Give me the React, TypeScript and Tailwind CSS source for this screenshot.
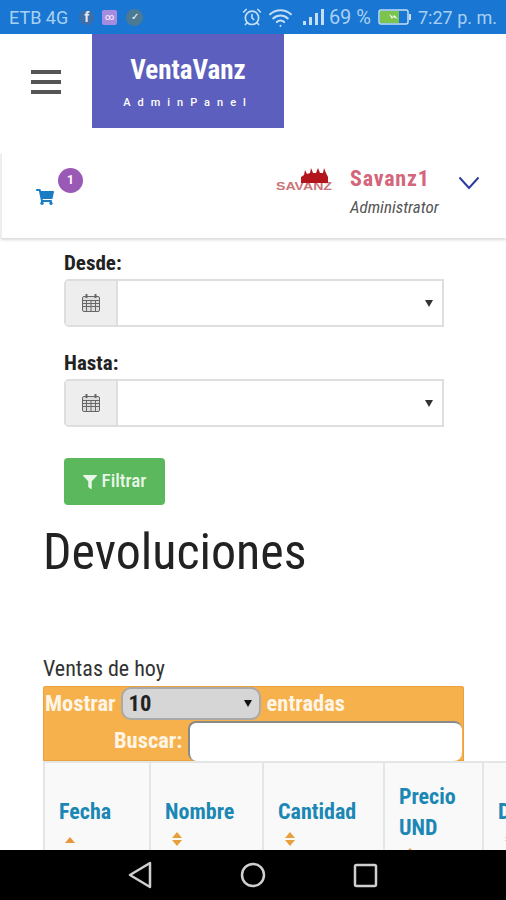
import { AlarmClock, Wifi } from "lucide-react";
import { FaFilter, FaShoppingCart } from "react-icons/fa";

const condensed = "font-['Roboto',sans-serif] [font-stretch:75%]";

function CalendarIcon() {
  return (
    <svg width="20" height="20" viewBox="0 0 20 20" fill="none" stroke="#666" strokeWidth="1">
      <rect x="1.5" y="3.5" width="17" height="15" rx="1.5" fill="#ddd" />
      <path d="M1.5 7.5h17M1.5 10.5h17M1.5 13.5h17M5.5 7.5v11M10 7.5v11M14.5 7.5v11" />
      <path d="M5.5 1v4M14.5 1v4" strokeWidth="2" />
    </svg>
  );
}

function DateField({ label }: { label: string }) {
  return (
    <div>
      <div className={`${condensed} text-[21px] leading-[24px] font-bold text-[#222]`}>{label}</div>
      <div className="mt-[4px] flex h-[48px] w-[380px] rounded-l-[5px] border-2 border-[#dedede]">
        <div className="flex w-[52px] items-center justify-center border-r-2 border-[#dedede] bg-[#eeeeee]">
          <CalendarIcon />
        </div>
        <div className="flex flex-1 items-center justify-end bg-white pr-[9px]">
          <span className="h-0 w-0 border-x-[4px] border-t-[7px] border-x-transparent border-t-[#333]" />
        </div>
      </div>
    </div>
  );
}

function SortBoth() {
  return (
    <div className="ml-[7px] mt-[5px] flex flex-col gap-[2px]">
      <span className="h-0 w-0 border-x-[5px] border-b-[6px] border-x-transparent border-b-[#e8a03a]" />
      <span className="h-0 w-0 border-x-[5px] border-t-[6px] border-x-transparent border-t-[#e8a03a]" />
    </div>
  );
}

function SortUp({ gap }: { gap: string }) {
  return <div className={`ml-[6px] h-0 w-0 border-x-[5px] border-b-[6px] border-x-transparent border-b-[#e8963a] ${gap}`} />;
}

function HeadCell({ width, title, children }: { width: string; title: string; children: React.ReactNode }) {
  return (
    <div className={`${width} shrink-0 border-r-2 border-[#e4e6e6] bg-[#f9f9f9] pl-[14px] pt-[33px]`}>
      <div className={`${condensed} text-[22px] leading-[31px] font-bold text-[#1b87b5]`}>{title}</div>
      {children}
    </div>
  );
}

export default function App() {
  return (
    <div className="flex h-[900px] w-[506px] flex-col overflow-hidden bg-white">
      {/* Status bar */}
      <div className="flex h-[34px] shrink-0 items-center justify-between bg-[#1976d2] pl-[9px] pr-[9px] font-['Roboto',sans-serif] text-[18px] text-[#a9d0f2]">
        <div className="flex items-center">
          <span>ETB 4G</span>
          <span className="ml-[11px] flex h-[15px] w-[15px] items-center justify-center rounded-full bg-[#3d6ea8] text-[14px] leading-none font-bold text-[#dfe9f5]">
            f
          </span>
          <span className="ml-[8px] flex h-[15px] w-[15px] items-center justify-center rounded-[2px] bg-[#a58ce0] text-[9px] leading-none text-white">
            ∞
          </span>
          <span className="ml-[9px] flex h-[17px] w-[17px] items-center justify-center rounded-full bg-[#4c7a94] text-[10px] leading-none text-white">
            ✓
          </span>
        </div>
        <div className="flex items-center">
          <AlarmClock size={20} strokeWidth={2} className="text-[#c4def5]" />
          <Wifi size={25} strokeWidth={2} className="ml-[6px] text-[#c4def5]" />
          <svg width="24" height="18" viewBox="0 0 24 18" className="ml-[9px]" fill="#c4def5">
            <rect x="1" y="13" width="3" height="4" />
            <rect x="7" y="9" width="3" height="8" />
            <rect x="13" y="5" width="3" height="12" />
            <rect x="19" y="1" width="3" height="16" />
          </svg>
          <span className="ml-[3px] text-[20px]">69 %</span>
          <svg width="34" height="16" viewBox="0 0 34 16" className="ml-[7px]">
            <rect x="1" y="1" width="29" height="14" rx="2" fill="none" stroke="#c4def5" strokeWidth="1.5" />
            <rect x="2" y="2" width="19" height="12" fill="#7cc44e" />
            <rect x="31" y="5" width="2" height="6" fill="#c4def5" />
            <path d="M11 5l4 3 1-2 4 4-5-2-1 2z" fill="#fff" />
          </svg>
          <span className="ml-[6px]">7:27 p. m.</span>
        </div>
      </div>

      {/* Top header */}
      <div className="flex h-[94px] shrink-0 items-center">
        <div className="ml-[31px] mt-[2px] flex w-[30px] flex-col gap-[6px]">
          <span className="h-[4px] bg-[#555]" />
          <span className="h-[4px] bg-[#555]" />
          <span className="h-[4px] bg-[#555]" />
        </div>
        <div className="ml-[31px] flex h-[94px] w-[192px] flex-col items-center bg-[#5c5fbd] pt-[20px] text-white">
          <div className={`${condensed} text-[27px] leading-[32px] font-bold`}>VentaVanz</div>
          <div className="mt-[10px] font-['Roboto',sans-serif] text-[11px] leading-[14px] font-medium tracking-[7px]">AdminPanel</div>
        </div>
      </div>

      {/* User bar */}
      <div className="mt-[25px] flex h-[85px] shrink-0 items-center justify-between rounded-l-[2px] border-l-2 border-[#eeeeee] bg-white shadow-[0_2px_3px_rgba(0,0,0,0.15)]">
        <div className="relative ml-[34px] mt-[2px]">
          <FaShoppingCart size={18} className="text-[#1b7cc4]" />
          <span className="absolute left-[22px] top-[-20px] flex h-[25px] w-[25px] items-center justify-center rounded-full bg-[#9b59b6] font-['Roboto',sans-serif] text-[12px] font-bold text-white">
            1
          </span>
        </div>
        <div className="flex items-start">
          <svg width="56" height="26" viewBox="0 0 56 26" className="mt-[-9px]">
            <text x="0" y="24" fontFamily="Liberation Sans" fontSize="11" fontWeight="700" fill="#c9757a" textLength="56" lengthAdjust="spacingAndGlyphs">
              SAVANZ
            </text>
            <path d="M25 17V11l3-2 1-5 2 4 3-1 1-5 2 5 3 0 2-5 2 5 3 0 1-5 2 5 2 4v6z" fill="#b3151c" />
          </svg>
          <div className="ml-[18px] mt-[-9px] w-[89px]">
            <div className={`${condensed} text-[22px] leading-[26px] font-bold tracking-[0.8px] text-[#d4657b]`}>Savanz1</div>
            <div className={`${condensed} mt-[5px] text-[17px] leading-[20px] italic text-[#555]`}>Administrator</div>
          </div>
          <svg width="22" height="14" viewBox="0 0 22 14" fill="none" stroke="#2b3a9e" strokeWidth="2" className="ml-[19px] mr-[26px] mt-[1px]">
            <path d="M1.5 1.5L11 12l9.5-10.5" />
          </svg>
        </div>
      </div>

      {/* Filters */}
      <div className="mt-[13px] flex min-h-0 flex-1 flex-col overflow-hidden">
        <div className="ml-[64px] flex flex-col gap-[24px]">
          <DateField label="Desde:" />
          <DateField label="Hasta:" />
        </div>
        <button className={`${condensed} ml-[64px] mt-[31px] flex h-[47px] w-[101px] items-center justify-center gap-[5px] rounded-[4px] bg-[#5cb85c] text-[19px] font-medium text-[#e8f6e8]`}>
          <FaFilter size={14} />
          Filtrar
        </button>

        <h1 className={`${condensed} ml-[43px] mt-[16px] text-[50px] leading-[62px] font-normal text-[#222]`}>Devoluciones</h1>

        <div className={`${condensed} ml-[43px] mt-[74px] mb-[5px] text-[22px] leading-[24px] text-[#333]`}>Ventas de hoy</div>

        {/* Table controls */}
        <div className={`${condensed} ml-[43px] h-[75px] w-[421px] shrink-0 rounded-t-[3px] bg-[#f6b14c] text-[22.5px] font-bold text-[#fff5e6] shadow-[inset_0_0_0_1px_#eca23c]`}>
          <div className="flex h-[35px] items-center pl-[2px]">
            <span>Mostrar</span>
            <div className="ml-[5px] flex h-[33px] w-[140px] items-center justify-between rounded-[10px] border-2 border-[#a9a9a9] bg-[#d6d6d6] pl-[6px] pr-[7px] text-[#222]">
              <span>10</span>
              <span className="h-0 w-0 border-x-[4px] border-t-[7px] border-x-transparent border-t-[#111]" />
            </div>
            <span className="ml-[6px]">entradas</span>
          </div>
          <div className="flex h-[40px] items-start pl-[71px]">
            <span className="mt-[3px]">Buscar:</span>
            <div className="ml-[6px] h-[40px] w-[274px] rounded-[8px] border-t-2 border-l-2 border-[#8a8a8a] bg-white" />
          </div>
        </div>

        {/* Table head */}
        <div className="ml-[43px] flex min-h-0 flex-1 overflow-hidden border-t-2 border-l-2 border-[#e4e6e6]">
          <HeadCell width="w-[106px]" title="Fecha">
            <SortUp gap="mt-[10px]" />
          </HeadCell>
          <HeadCell width="w-[113px]" title="Nombre">
            <SortBoth />
          </HeadCell>
          <HeadCell width="w-[121px]" title="Cantidad">
            <SortBoth />
          </HeadCell>
          <div className="w-[99px] shrink-0 border-r-2 border-[#e4e6e6] bg-[#f9f9f9] pl-[14px] pt-[18px]">
            <div className={`${condensed} text-[22px] leading-[31px] font-bold text-[#1b87b5]`}>Precio</div>
            <div className={`${condensed} text-[22px] leading-[31px] font-bold text-[#1b87b5]`}>UND</div>
            <SortUp gap="mt-[5px]" />
          </div>
          <HeadCell width="w-[60px]" title="Dcto">
            <SortBoth />
          </HeadCell>
        </div>
      </div>

      {/* Android nav bar */}
      <div className="flex h-[50px] shrink-0 items-center justify-center gap-[87px] bg-black">
        <svg width="25" height="28" viewBox="0 0 25 28" fill="none" stroke="#cfcfcf" strokeWidth="2.5" strokeLinejoin="round">
          <path d="M22 2v24L2 14z" />
        </svg>
        <svg width="26" height="26" viewBox="0 0 26 26" fill="none" stroke="#cfcfcf" strokeWidth="2.5">
          <circle cx="13" cy="13" r="11" />
        </svg>
        <svg width="25" height="25" viewBox="0 0 25 25" fill="none" stroke="#cfcfcf" strokeWidth="2.5" strokeLinejoin="round">
          <rect x="2" y="2" width="21" height="21" rx="1.5" />
        </svg>
      </div>
    </div>
  );
}
